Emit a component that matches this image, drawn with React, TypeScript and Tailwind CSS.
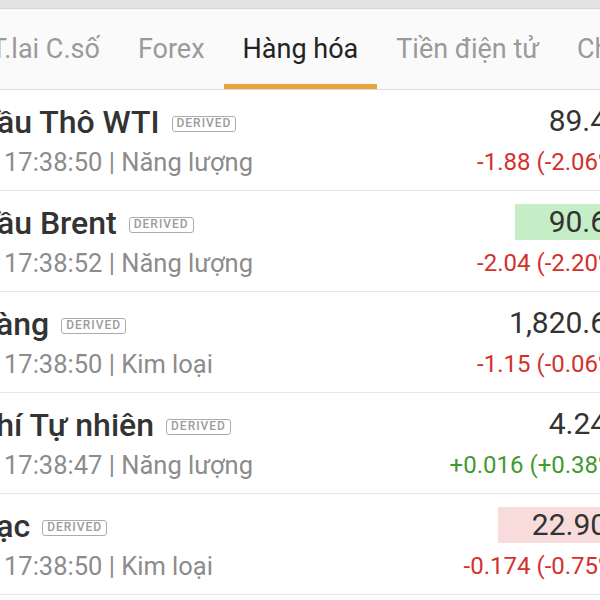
import React from 'react';

const tabs = ['T.lai C.số', 'Forex', 'Hàng hóa', 'Tiền điện tử', 'Chỉ số'];

type Row = {
  name: string;
  time: string;
  group: string;
  price: string;
  change: string;
  up: boolean;
  flash?: 'up' | 'down';
};

const rows: Row[] = [
  { name: 'Dầu Thô WTI', time: '17:38:50', group: 'Năng lượng', price: '89.47', change: '-1.88 (-2.06%)', up: false },
  { name: 'Dầu Brent', time: '17:38:52', group: 'Năng lượng', price: '90.64', change: '-2.04 (-2.20%)', up: false, flash: 'up' },
  { name: 'Vàng', time: '17:38:50', group: 'Kim loại', price: '1,820.65', change: '-1.15 (-0.06%)', up: false },
  { name: 'Khí Tự nhiên', time: '17:38:47', group: 'Năng lượng', price: '4.245', change: '+0.016 (+0.38%)', up: true },
  { name: 'Bạc', time: '17:38:50', group: 'Kim loại', price: '22.903', change: '-0.174 (-0.75%)', up: false, flash: 'down' },
];

export default function App() {
  return (
    <div className="w-[600px] h-[600px] overflow-hidden bg-white" style={{ fontFamily: 'Roboto, "Noto Sans", sans-serif' }}>
      <div className="h-[9px] bg-[#e3e3e3] border-b border-[#d6d6d6]" />
      {/* tab bar */}
      <div className="h-[81px] bg-[#fafafa] border-b border-[#dcdcdc] flex items-stretch -ml-[28px] whitespace-nowrap">
        {tabs.map((t) => {
          const active = t === 'Hàng hóa';
          return (
            <div key={t} className="relative flex items-center px-[19px] pt-[1px] shrink-0">
              <span className={`text-[27px] leading-none ${active ? 'text-[#222222]' : 'text-[#9a9a9a]'}`}>{t}</span>
              {active && <div className="absolute left-0 right-0 bottom-0 h-[5px] bg-[#e9a43c]" />}
            </div>
          );
        })}
      </div>
      {/* list */}
      <div className="w-[648px] -ml-[24px]">
        {rows.map((r) => (
          <div key={r.name} className="h-[101px] flex justify-between border-b border-[#e8e8e8] whitespace-nowrap">
            <div className="pt-[15px] flex flex-col">
              <div className="flex items-center h-[34px]">
                <span className="text-[32px] leading-[34px] font-medium text-[#333333]">{r.name}</span>
                <span className="ml-[12px] mt-[3px] h-[16px] px-[4px] border-[1.5px] border-[#acacac] rounded-[3px] text-[12px] leading-[13px] tracking-[1px] font-medium text-[#9c9c9c]">
                  DERIVED
                </span>
              </div>
              <div className="mt-[8px] pl-[28px] text-[25.5px] leading-[30px] text-[#8c8c8c]">
                {r.time} | {r.group}
              </div>
            </div>
            <div className="pt-[13px] flex flex-col items-end">
              <div
                className={`h-[36px] pl-[34px] text-[30px] leading-[36px] text-[#333333] ${
                  r.flash === 'up' ? 'bg-[#c5eec7]' : r.flash === 'down' ? 'bg-[#f8dcdc]' : ''
                }`}
              >
                {r.price}
              </div>
              <div className={`mt-[9px] text-[24px] leading-[28px] ${r.up ? 'text-[#3f9b2f]' : 'text-[#d3322c]'}`}>{r.change}</div>
            </div>
          </div>
        ))}
      </div>
    </div>
  );
}
